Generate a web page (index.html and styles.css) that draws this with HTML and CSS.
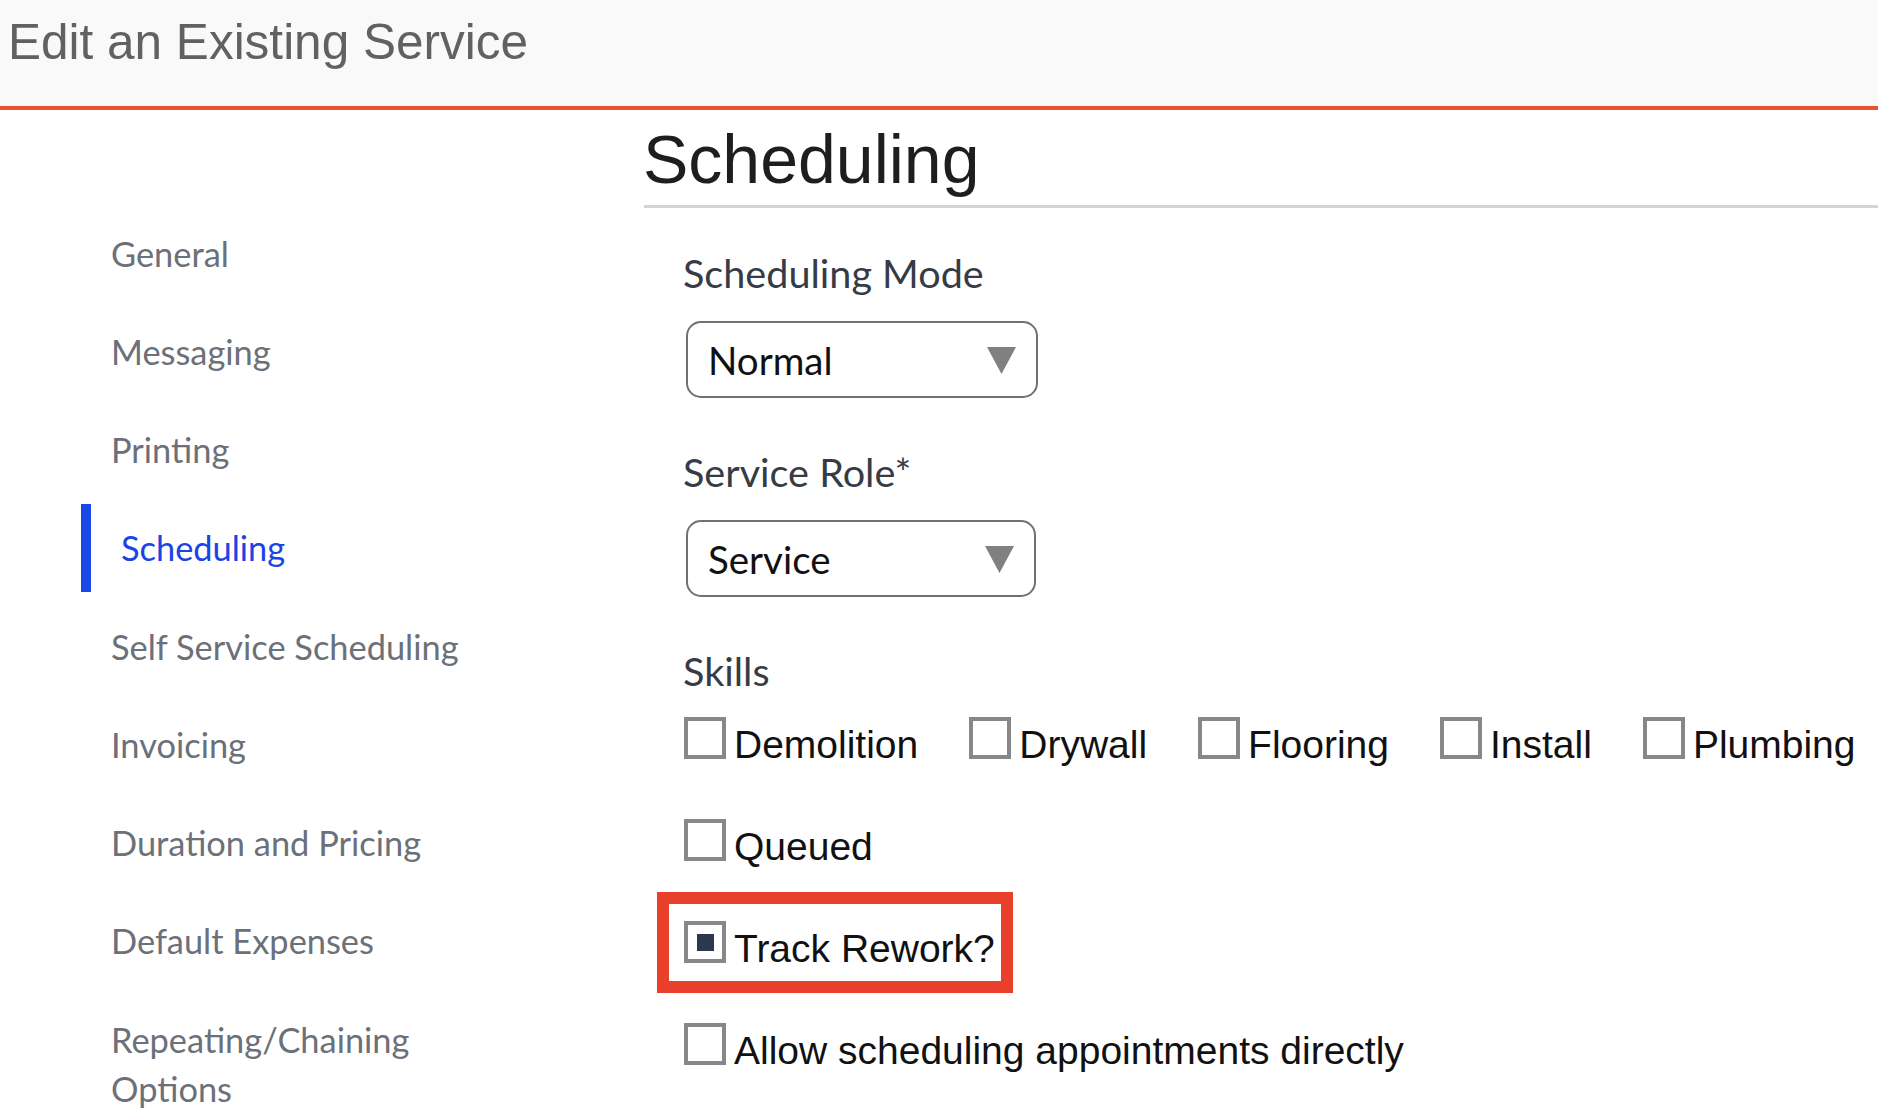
FILE: index.html
```html
<!DOCTYPE html>
<html lang="en">
<head>
<meta charset="utf-8">
<title>Edit an Existing Service</title>
<link rel="stylesheet" href="styles.css">
</head>
<body>
<header class="topbar">
  <h1 class="page-title">Edit an Existing Service</h1>
</header>
<div class="layout">
  <nav class="sidenav">
    <a class="nav-item">General</a>
    <a class="nav-item">Messaging</a>
    <a class="nav-item">Printing</a>
    <a class="nav-item active">Scheduling</a>
    <a class="nav-item">Self Service Scheduling</a>
    <a class="nav-item">Invoicing</a>
    <a class="nav-item">Duration and Pricing</a>
    <a class="nav-item">Default Expenses</a>
    <a class="nav-item">Repeating/Chaining Options</a>
  </nav>
  <main class="content">
    <h2 class="section-title">Scheduling</h2>
    <div class="form">
      <div class="field">
        <div class="field-label">Scheduling Mode</div>
        <div class="select select-mode">
          <span class="select-value">Normal</span>
          <svg class="caret" width="29" height="27" viewBox="0 0 29 27"><polygon points="0,0 29,0 14.5,27" fill="#808080"/></svg>
        </div>
      </div>
      <div class="field">
        <div class="field-label">Service Role*</div>
        <div class="select select-role">
          <span class="select-value">Service</span>
          <svg class="caret" width="29" height="27" viewBox="0 0 29 27"><polygon points="0,0 29,0 14.5,27" fill="#808080"/></svg>
        </div>
      </div>
      <div class="field field-skills">
        <div class="field-label">Skills</div>
        <div class="check-row">
          <label class="check"><span class="box"></span><span class="check-text">Demolition</span></label>
          <label class="check"><span class="box"></span><span class="check-text">Drywall</span></label>
          <label class="check"><span class="box"></span><span class="check-text">Flooring</span></label>
          <label class="check"><span class="box"></span><span class="check-text">Install</span></label>
          <label class="check"><span class="box"></span><span class="check-text">Plumbing</span></label>
        </div>
      </div>
      <div class="check-row">
        <label class="check"><span class="box"></span><span class="check-text">Queued</span></label>
      </div>
      <div class="check-row">
        <label class="check highlighted"><span class="box checked"></span><span class="check-text">Track Rework?</span></label>
      </div>
      <div class="check-row">
        <label class="check"><span class="box"></span><span class="check-text">Allow scheduling appointments directly</span></label>
      </div>
    </div>
  </main>
</div>
</body>
</html>
```
FILE: styles.css
```css
html, body {
  margin: 0;
  padding: 0;
  overflow: hidden;
  background: #ffffff;
}

body {
  font-family: "Liberation Sans", Arial, sans-serif;
  width: 1878px;
  height: 1110px;
}

.topbar {
  height: 106px;
  background: #f9f9f9;
  border-bottom: 4px solid #e7522f;
  box-sizing: content-box;
  padding: 0 0 0 8px;
}

.page-title {
  margin: 0;
  padding-top: 17px;
  font-family: "Liberation Sans", Arial, sans-serif;
  font-weight: normal;
  font-size: 49.5px;
  line-height: 1;
  color: #616161;
}

.layout {
  display: grid;
  grid-template-columns: 644px 1fr;
}

.sidenav {
  display: flex;
  flex-direction: column;
  gap: 10.25px;
  padding: 99px 0 0 81px;
  width: 420px;
}

.nav-item {
  display: block;
  padding: 19.5px 0 19.5px 30px;
  font-family: Lato, "Liberation Sans", sans-serif;
  font-size: 34.4px;
  line-height: 49px;
  color: #6b7079;
  text-decoration: none;
}

.nav-item.active {
  border-left: 10px solid #1a48e8;
  color: #1a44e6;
}

.content {
  padding-top: 16px;
}

.section-title {
  margin: 0;
  font-family: "Liberation Sans", Arial, sans-serif;
  font-weight: normal;
  font-size: 68px;
  line-height: 67px;
  text-indent: -1px;
  color: #1e1e1e;
  padding-bottom: 12px;
  border-bottom: 3px solid #d4d4d4;
}

.form {
  padding: 41px 0 0 39px;
  display: flex;
  flex-direction: column;
}

.field {
  display: flex;
  flex-direction: column;
  align-items: flex-start;
  margin-bottom: 50px;
}

.field-skills {
  margin-bottom: 0;
}

.field-label {
  font-family: Lato, "Liberation Sans", sans-serif;
  font-size: 39.6px;
  line-height: 48px;
  color: #363b45;
}

.select {
  margin-top: 24px;
  margin-left: 3px;
  box-sizing: border-box;
  height: 77px;
  border: 2px solid #6e7178;
  border-radius: 15px;
  background: #ffffff;
  display: flex;
  align-items: center;
  justify-content: space-between;
  padding: 0 20px 0 20px;
}

.select-mode {
  width: 352px;
}

.select-role {
  width: 350px;
}

.select-value {
  font-family: Lato, "Liberation Sans", sans-serif;
  font-size: 38.5px;
  color: #111111;
}

.caret {
  display: block;
  margin-top: 2px;
}

.check-row {
  display: flex;
  gap: 51px;
  margin-top: 26px;
  margin-bottom: 28px;
  padding-left: 1px;
}

.check {
  display: inline-flex;
  align-items: flex-start;
  gap: 8px;
  height: 48px;
  font-family: "Liberation Sans", Arial, sans-serif;
  font-size: 39px;
  line-height: 48px;
  color: #111111;
}

.box {
  box-sizing: border-box;
  width: 42px;
  height: 42px;
  margin-top: -4px;
  border: 4px solid #878787;
  background: #ffffff;
  display: flex;
  align-items: center;
  justify-content: center;
  flex: none;
}

.box.checked::after {
  content: "";
  width: 17px;
  height: 17px;
  background: #2a3950;
}

.highlighted {
  position: relative;
}

.highlighted::before {
  content: "";
  position: absolute;
  left: -27px;
  top: -33px;
  right: -18px;
  bottom: -20px;
  border: 12px solid #e8402a;
  pointer-events: none;
}
```
